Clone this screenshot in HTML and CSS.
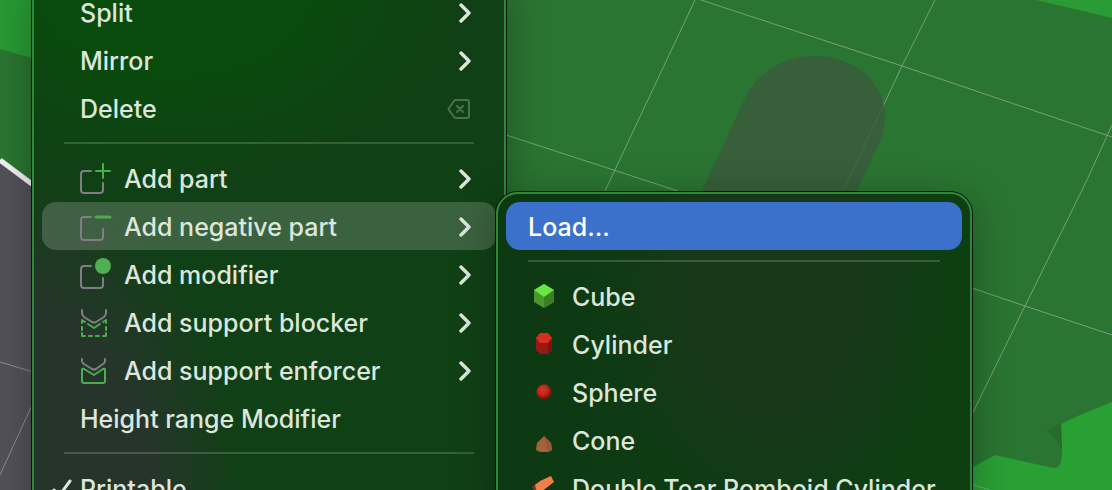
FILE: index.html
```
<!doctype html>
<html lang="en">
<head>
    <meta charset="UTF-8">
    <meta name="viewport" content="width=device-width, initial-scale=1.0">
    <title>Add negative part</title>
    <link rel="stylesheet" href="styles.css">
</head>
<body>
    <!-- 3D scene -->
    <svg class="scene" viewBox="0 0 1112 490" preserveAspectRatio="xMinYMin slice" aria-hidden="true">
        <rect width="1112" height="490" fill="#2a7531"/>
        <path d="M0 0H60V66L0 49Z" fill="#289a33"/>
        <path d="M0 159L60 205V490H0Z" fill="#535159"/>
        <path d="M0 160L60 205" stroke="#f2f2f2" stroke-width="5"/>
        <path d="M0 362L60 380M60 344L0 475" stroke="#8f8d93" fill="none"/>
        <path d="M1036 0H1112V18Z" fill="#2a9b35"/>
        <path d="M960 474L995 455L1054 468Q1061 469 1062 455L1061 424L1080 415L1112 402V490H960Z" fill="#29a034"/>
        <path d="M1046 430L1061 423L1062 450L1057 440Z" fill="#286b2e"/>
        <g class="grid-lines">
            <path d="M500 133L678 191M701 0L902 66L1112 137M960 284L1025 306L1112 335M960 481L990 490"/>
            <path d="M695 0L605 191M935 0L902 66L843 191M1112 125L1087 180L1025 306L960 439"/>
        </g>
        <path d="M702 191L745 98C757 72 785 56 815 56C856 56 885 84 885 116C885 127 883 135 880 142L856 191L830 240H680Z" fill="#3a5a3d" fill-opacity=".8"/>
    </svg>

    <!-- shared icons -->
    <svg class="defs" aria-hidden="true">
        <symbol id="arrow" viewBox="0 0 12 20">
            <path d="M2 2L10 10L2 18" fill="none" stroke="#dce6dc" stroke-width="3.4" stroke-linecap="round" stroke-linejoin="round"/>
        </symbol>
    </svg>

    <!-- context menu -->
    <ul class="menu">
        <li><button class="item">Split<svg class="arrow"><use href="#arrow"/></svg></button></li>
        <li><button class="item">Mirror<svg class="arrow"><use href="#arrow"/></svg></button></li>
        <li>
            <button class="item">Delete
                <svg class="key" viewBox="0 0 24 20" fill="none" stroke="#4b704d" stroke-width="2" stroke-linecap="round" stroke-linejoin="round">
                    <path d="M9 1H20Q22 1 22 3V17Q22 19 20 19H9Q8 19 7 18L2 11Q1 10 2 9L7 2Q8 1 9 1Z"/>
                    <path d="M10 7L16 13M16 7L10 13"/>
                </svg>
            </button>
        </li>
        <li class="line"></li>
        <li>
            <button class="item">
                <svg class="icon" viewBox="0 0 32 32">
                    <path class="gray" d="M11 9H4Q1 9 1 12V28Q1 31 4 31H20Q23 31 23 28V21"/>
                    <path class="green" d="M16 9H30M23 2V16"/>
                </svg>Add part<svg class="arrow"><use href="#arrow"/></svg>
            </button>
        </li>
        <li class="open">
            <button class="item active">
                <svg class="icon" viewBox="0 0 32 32">
                    <path class="gray" d="M11 7H4Q1 7 1 10V27Q1 30 4 30H20Q23 30 23 27V19"/>
                    <path class="green thick" d="M16 7H30"/>
                </svg>Add negative part<svg class="arrow"><use href="#arrow"/></svg>
            </button>
            <!-- submenu -->
            <ul class="menu submenu">
                <li><button class="item selected">Load...</button></li>
                <li class="line"></li>
                <li>
                    <button class="item">
                        <svg class="icon" viewBox="0 0 32 32">
                            <path d="M16 4L26 10V22L16 28L6 22V10Z" fill="#48982c"/>
                            <path d="M16 16L26 10V22L16 28Z" fill="#397f23"/>
                            <path d="M16 4L26 10L16 17L6 10Z" fill="#68e642"/>
                        </svg>Cube
                    </button>
                </li>
                <li>
                    <button class="item">
                        <svg class="icon" viewBox="0 0 32 32">
                            <path d="M8 10L12 5H20L24 10V22L20 26H12L8 22Z" fill="#961a12"/>
                            <path d="M20 15L24 10V22L20 26Z" fill="#7c150e"/>
                            <path d="M8 10L12 5H20L24 10L20 15H12Z" fill="#d92d1f"/>
                        </svg>Cylinder
                    </button>
                </li>
                <li>
                    <button class="item">
                        <svg class="icon" viewBox="0 0 32 32">
                            <defs>
                                <radialGradient id="ball" cx=".42" cy=".35" r=".65">
                                    <stop offset="0" stop-color="#e03022"/>
                                    <stop offset=".5" stop-color="#c4261b"/>
                                    <stop offset="1" stop-color="#67120c"/>
                                </radialGradient>
                            </defs>
                            <circle cx="16" cy="16" r="7.5" fill="url(#ball)"/>
                        </svg>Sphere
                    </button>
                </li>
                <li>
                    <button class="item">
                        <svg class="icon" viewBox="0 0 32 32">
                            <path d="M16 12L23 19L24 26L20 28H12L8 26L9 19Z" fill="#a5633c"/>
                            <path d="M16 12L23 19L24 26L20 28Z" fill="#94583a"/>
                        </svg>Cone
                    </button>
                </li>
                <li>
                    <button class="item">
                        <svg class="icon" viewBox="0 0 32 32">
                            <path d="M4 15L9 11L14 20L8 22Z" fill="#7d3a22"/>
                            <path d="M7 13L12 9L23 4L26 10L13 20H9Z" fill="#f07f49"/>
                        </svg>Double Tear Romboid Cylinder
                    </button>
                </li>
            </ul>
        </li>
        <li>
            <button class="item">
                <svg class="icon" viewBox="0 0 32 32">
                    <path class="gray" d="M11 8H4Q1 8 1 11V27Q1 30 4 30H20Q23 30 23 27V20"/>
                    <circle cx="23" cy="8" r="8" fill="#50ae53"/>
                </svg>Add modifier<svg class="arrow"><use href="#arrow"/></svg>
            </button>
        </li>
        <li>
            <button class="item">
                <svg class="icon" viewBox="0 0 32 32">
                    <path class="gray" d="M2 4V7Q2 9 4 11L12 16Q14 17 16 16L24 11Q26 9 26 7V4"/>
                    <path class="green" d="M2 17V14L5 16M8 18L14 22L20 18M23 16L26 14V17M2 21V24M26 21V24M2 27V30H5M9 30H12M16 30H19M23 30H26V27"/>
                </svg>Add support blocker<svg class="arrow"><use href="#arrow"/></svg>
            </button>
        </li>
        <li>
            <button class="item">
                <svg class="icon" viewBox="0 0 32 32">
                    <path class="gray" d="M2 5V7Q2 9 4 10L12 15Q14 16 16 15L23 10Q25 9 25 7V5"/>
                    <path class="green" d="M4 15L14 21L23 15Q25 14 25 16V27Q25 29 23 29H4Q2 29 2 27V16Q2 14 4 15Z"/>
                </svg>Add support enforcer<svg class="arrow"><use href="#arrow"/></svg>
            </button>
        </li>
        <li><button class="item">Height range Modifier</button></li>
        <li class="line"></li>
        <li>
            <button class="item checked">
                <svg class="check" viewBox="0 0 28 24">
                    <path d="M2 13L7 19L18 4" fill="none" stroke="#dce6dc" stroke-width="3" stroke-linecap="round" stroke-linejoin="round"/>
                </svg>Printable
            </button>
        </li>
    </ul>
</body>
</html>
```
FILE: styles.css
```
body,ul{
    margin: 0;
}
ul{
    padding-left: 0;
    list-style: none;
}
body{
    position: relative;
    height: 100vh;
    overflow: hidden;
    background: #2a7531;
    font-family: Inter, "Liberation Sans", sans-serif;
}
.scene{
    display: block;
    width: 100%;
    height: 100%;
}
.grid-lines{
    fill: none;
    stroke: #76a17a;
    stroke-width: 1;
}
.defs{
    display: none;
}

/* menu */
.menu{
    position: absolute;
    top: -22px;
    bottom: -40px;
    left: 32px;
    box-sizing: border-box;
    width: max-content;
    min-width: 474px;
    padding: 8px;
    border: 2px solid #30873a;
    border-radius: 22px;
    background:
        radial-gradient(ellipse 210px 360px at 0 100%, #26352b 60%, transparent),
        radial-gradient(ellipse 300px 210px at 30% 0, #094b0d 40%, transparent),
        #104015;
    background-origin: border-box;
    box-shadow: 0 0 0 1px #06140a, 0 8px 40px rgba(0, 0, 0, .3);
}
.submenu{
    top: -10px;
    bottom: auto;
    left: 100%;
    z-index: 1;
    min-width: 476px;
    background:
        radial-gradient(ellipse 170px 240px at 58% 30%, #183819 50%, transparent),
        linear-gradient(90deg, #0d3912, #0e3f12);
}
.open{
    position: relative;
}
.line{
    height: 2px;
    margin: 10px 22px;
    background: rgba(255, 255, 255, .16);
}

/* rows */
.item{
    display: flex;
    align-items: center;
    width: 100%;
    height: 48px;
    padding: 2px 25px 0 38px;
    border: 0;
    border-radius: 14px;
    background: none;
    color: #dce6dc;
    font: 500 25px/32px Inter, "Liberation Sans", sans-serif;
    text-align: left;
    white-space: nowrap;
}
.submenu .item{
    padding: 2px 22px 0;
}
.active{
    background: rgba(255, 255, 255, .18);
}
.item.selected{
    background: #3b71ca;
    color: #fff;
}
.item.checked{
    padding-left: 10px;
}

/* icons */
.icon{
    width: 32px;
    height: 32px;
    margin: 0 12px 2px 0;
    flex: none;
}
.gray,.green{
    fill: none;
    stroke: #807e84;
    stroke-width: 2;
    stroke-linecap: round;
    stroke-linejoin: round;
}
.green{
    stroke: #4aad4e;
}
.thick{
    stroke-width: 3;
}
.arrow{
    width: 12px;
    height: 20px;
    margin-left: auto;
}
.key{
    width: 24px;
    height: 20px;
    margin-left: auto;
}
.check{
    width: 28px;
    height: 24px;
}
```
